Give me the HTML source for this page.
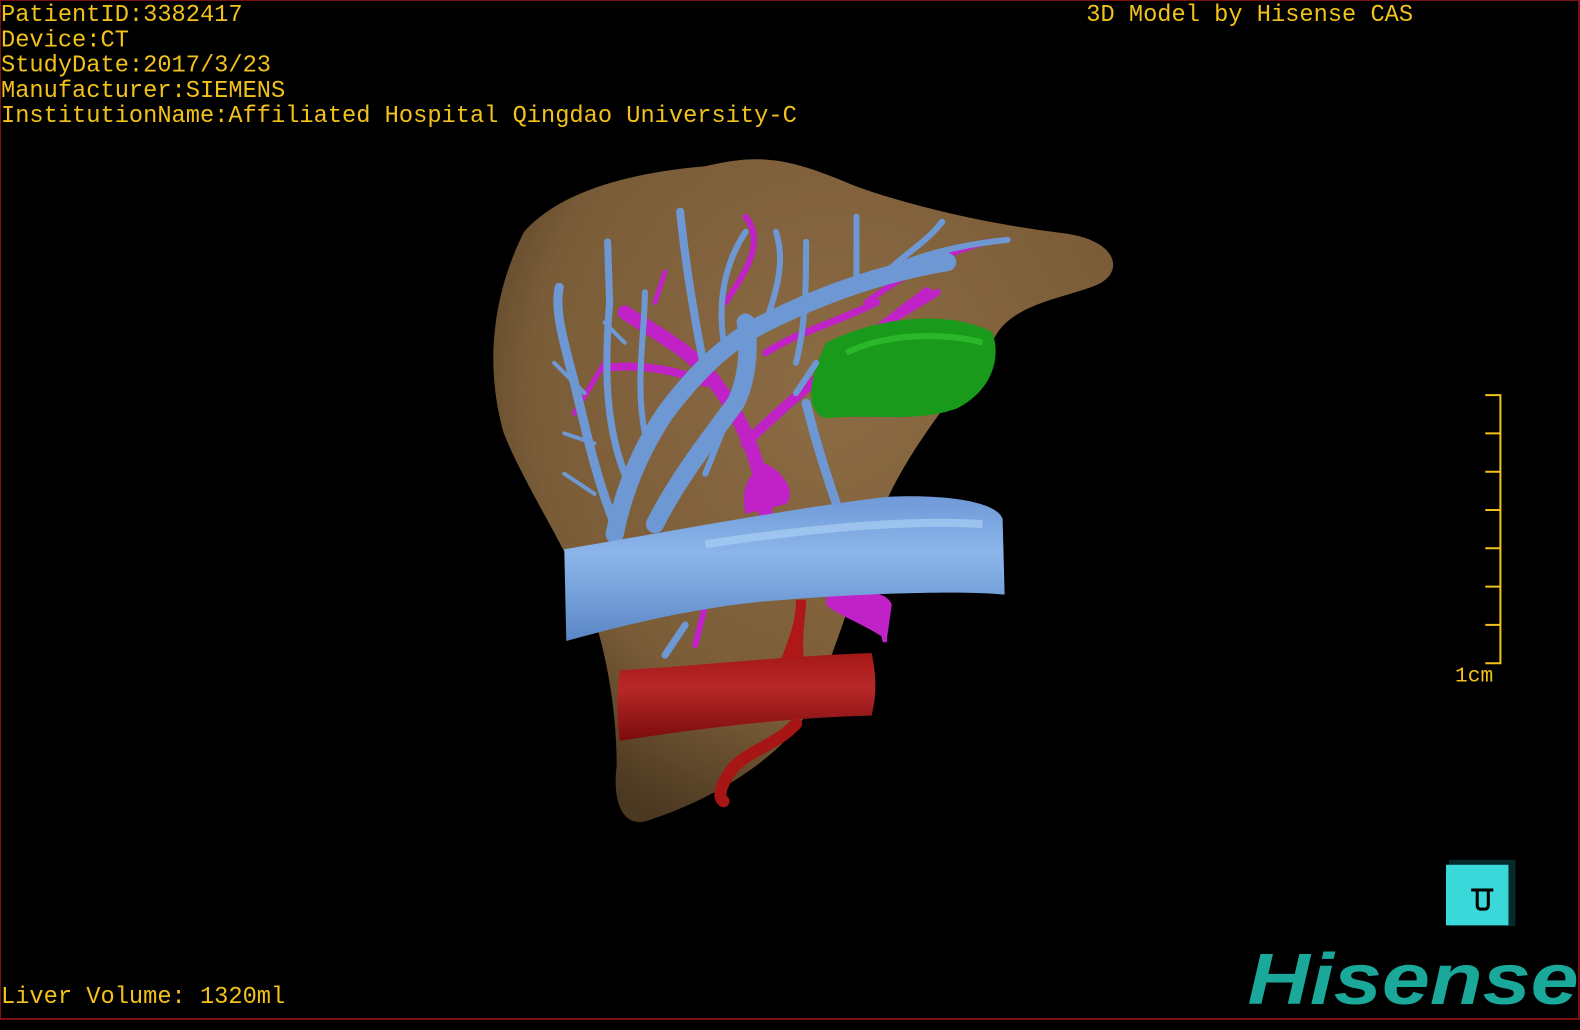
<!DOCTYPE html>
<html><head><meta charset="utf-8"><style>
html,body{margin:0;padding:0;background:#000;width:1580px;height:1020px;overflow:hidden}
#w{position:absolute;left:0;top:0;width:1568px;height:1012px;transform-origin:0 0;transform:scale(1.00765,1.0079)}
.frame{position:absolute;left:0;top:0;width:1565px;height:1009px;border:1px solid #7a1010;border-right:2px solid #7a1010;border-bottom:2px solid #7a1010}
.t{position:absolute;font-family:"Liberation Mono",monospace;font-size:23.5px;color:#f2c21a;line-height:25px;white-space:pre;letter-spacing:0}
</style></head><body><div id="w">
<svg width="1568" height="1012" style="position:absolute;left:0;top:0">
<defs>
<radialGradient id="lv" cx="0.55" cy="0.35" r="0.7"><stop offset="0" stop-color="#8c6c44"/><stop offset="0.7" stop-color="#7a5c38"/><stop offset="1" stop-color="#4a3820"/></radialGradient>
<linearGradient id="ivc" x1="0" y1="0" x2="0" y2="1"><stop offset="0" stop-color="#6f99d8"/><stop offset="0.4" stop-color="#8cb6ea"/><stop offset="1" stop-color="#5a86c6"/></linearGradient>
<linearGradient id="ao" x1="0" y1="0" x2="0" y2="1"><stop offset="0" stop-color="#a51818"/><stop offset="0.4" stop-color="#b82828"/><stop offset="1" stop-color="#7a0c0c"/></linearGradient>
</defs>
<path d="M700,165 C760,150 790,160 850,185 C920,210 1000,225 1060,232 C1110,240 1115,270 1090,282 C1060,295 1010,300 990,330 C960,380 900,440 870,520 C850,580 830,640 810,690 C790,740 720,790 640,815 C615,820 608,790 612,760 C612,700 600,640 585,600 C560,540 520,480 500,430 C480,360 490,290 520,230 C560,185 640,170 700,165 Z" fill="url(#lv)"/>
<g fill="none" stroke="#c022c8" stroke-linecap="round">
<path d="M760,520 C760,470 740,420 710,380 C690,350 650,330 620,310" stroke-width="14"/>
<path d="M740,440 C780,400 840,350 920,290" stroke-width="10"/>
<path d="M700,380 C680,370 640,360 600,365" stroke-width="8"/>
<path d="M720,300 C740,270 760,240 740,215" stroke-width="6"/>
<path d="M860,300 C900,270 940,250 980,240" stroke-width="6"/>
<path d="M650,300 L660,270 M720,420 C700,440 690,460 680,470 M600,360 L570,410 M860,580 C870,600 875,620 878,635" stroke-width="5"/>
<path d="M700,600 L690,640" stroke-width="6"/>
<path d="M760,350 C790,330 830,320 870,300 M830,350 C860,330 900,310 930,290" stroke-width="7"/>
</g>
<path d="M820,590 C850,585 880,585 885,600 L880,635 C860,620 830,610 820,600 Z" fill="#c022c8"/>
<path d="M760,460 C780,470 790,490 780,500 L740,510 C735,490 740,470 760,460 Z" fill="#c022c8"/>
<path d="M820,340 C880,310 950,310 985,330 C995,360 980,390 950,405 C910,420 860,410 820,415 C800,410 800,380 820,340 Z" fill="#1a9a1a"/>
<path d="M840,350 C880,330 940,330 975,340" stroke="#2ab82a" stroke-width="6" fill="none"/>
<g fill="none" stroke="#6e98d4" stroke-linecap="round">
<path d="M610,530 C620,480 640,440 660,410 C690,370 720,340 760,320 C820,290 880,270 940,260" stroke-width="18"/>
<path d="M650,520 C670,480 700,440 730,400 C740,380 745,350 740,320" stroke-width="18"/>
<path d="M610,520 C590,470 580,420 570,380 C560,340 550,310 555,285" stroke-width="9"/>
<path d="M620,470 C600,420 600,360 605,300 L603,240" stroke-width="7"/>
<path d="M640,430 C630,380 640,330 640,290" stroke-width="6"/>
<path d="M700,370 C690,320 680,260 675,210" stroke-width="8"/>
<path d="M720,350 C710,300 720,260 740,230" stroke-width="6"/>
<path d="M790,360 C800,320 800,280 800,240 M760,320 C770,290 780,260 770,230" stroke-width="6"/>
<path d="M800,400 C810,440 820,470 830,500" stroke-width="9"/>
<path d="M850,280 L850,215 M880,270 C900,250 920,240 935,220 M900,260 C940,245 980,240 1000,238" stroke-width="6"/>
<path d="M560,470 L590,490 M550,360 L580,390 M620,340 L600,320 M560,430 L590,440" stroke-width="4"/>
<path d="M700,470 L720,420 M790,390 L810,360" stroke-width="6"/>
<path d="M680,620 L660,650" stroke-width="7"/>
</g>
<path d="M560,545 C650,530 780,505 880,493 C940,490 990,498 995,515 L997,590 C950,585 840,590 780,595 C700,600 620,620 562,636 Z" fill="url(#ivc)"/>
<path d="M700,540 C800,525 900,515 975,520" stroke="#a8cef4" stroke-width="8" fill="none" opacity="0.7"/>
<path d="M790,595 C790,620 780,640 775,655 L798,655 C795,630 800,610 800,595 Z" fill="#b01818"/>
<path d="M615,665 C700,660 790,650 865,648 C870,670 870,690 865,710 C780,712 700,722 615,735 C612,710 612,690 615,665 Z" fill="url(#ao)"/>
<path d="M790,718 C770,740 740,745 725,765 C715,780 712,790 718,795" stroke="#a81515" stroke-width="12" fill="none" stroke-linecap="round"/>
<g stroke="#f2c21a" stroke-width="2" fill="none">
<path d="M1474,392 H1489 V658 H1474"/>
<path d="M1474,430 H1489 M1474,468 H1489 M1474,506 H1489 M1474,544 H1489 M1474,582 H1489 M1474,620 H1489"/>
</g>
<rect x="1438" y="853" width="66" height="66" fill="#062a2a"/>
<rect x="1435" y="858" width="62" height="60" fill="#3ad8d8"/>
<path d="M1460,883 H1482 M1477,883 V898 Q1477,902 1473,902 H1470 Q1466,902 1466,898 V883" stroke="#000" stroke-width="3" fill="none"/>
</svg>
<div class="frame"></div>
<div class="t" style="left:1px;top:3px">PatientID:3382417
Device:CT
StudyDate:2017/3/23
Manufacturer:SIEMENS
InstitutionName:Affiliated Hospital Qingdao University-C</div>
<div class="t" style="left:1078px;top:3px">3D Model by Hisense CAS</div>
<div class="t" style="left:1444px;top:659px;font-size:21px">1cm</div>
<div class="t" style="left:1px;top:977px">Liver Volume: 1320ml</div>
<div style="position:absolute;left:1238px;top:922px;font-family:'Liberation Sans',sans-serif;font-weight:bold;font-style:italic;font-size:72px;color:#1aa89a;line-height:100px;transform-origin:0 0;transform:scaleX(1.19);white-space:nowrap">Hisense</div>
</div></body></html>
